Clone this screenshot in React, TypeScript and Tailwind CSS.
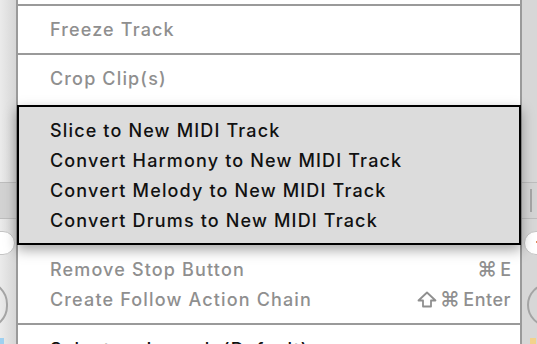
export default function App() {
  const font = { fontFamily: "Inter, 'Noto Sans', sans-serif" }

  return (
    <div
      className="relative flex h-[344px] w-[537px] overflow-hidden bg-[#d9d9d9] text-[18px] font-medium tracking-[1.15px]"
      style={font}
    >
      {/* left side of the app behind the menu */}
      <div className="relative w-[16px] shrink-0 bg-gradient-to-r from-[#ebebeb] to-[#d6d6d6]">
        <div className="absolute left-0 top-[182px] h-[37px] w-full border-y border-[#bdbdbd] bg-[#d2d2d2]" />
        <div className="absolute left-[-20px] top-[231px] h-[24px] w-[35px] rounded-full border border-[#c4c4c4] bg-white" />
        <div className="absolute left-[-38px] top-[281px] h-[48px] w-[46px] rounded-full border-2 border-[#a4a4a4]" />
        <div className="absolute left-0 top-[338px] h-[6px] w-[4px] bg-[#9fd0f0]" />
      </div>

      {/* menu */}
      <div className="relative z-10 w-[506px] shrink-0 border-x-2 border-[#9a9a9a] bg-white">
        <div className="h-[4px]" />
        <div className="h-[2px] bg-[#9a9a9a]" />
        <div className="flex h-[47px] items-center pl-[32px] text-[#8f8f8f]">Freeze Track</div>
        <div className="h-[2px] bg-[#9a9a9a]" />
        <div className="flex h-[50px] items-center pb-[3px] pl-[32px] text-[#8f8f8f]">Crop Clip(s)</div>

        <div className="-mx-[1px] flex h-[140px] flex-col justify-center border-2 border-black bg-[#dcdcdc] pl-[31px] text-[#111] shadow-[0_5px_12px_rgba(0,0,0,0.35)]">
          <div className="flex h-[30px] items-center">Slice to New MIDI Track</div>
          <div className="flex h-[30px] items-center">Convert Harmony to New MIDI Track</div>
          <div className="flex h-[30px] items-center">Convert Melody to New MIDI Track</div>
          <div className="flex h-[30px] items-center">Convert Drums to New MIDI Track</div>
        </div>

        <div className="flex flex-col pt-[9px] pr-[9px] pl-[32px] text-[#8f8f8f]">
          <div className="flex h-[30px] items-center justify-between">
            <span>Remove Stop Button</span>
            <span className="flex items-center gap-[3px] tracking-normal">
              <span className="text-[20px]">⌘</span>E
            </span>
          </div>
          <div className="flex h-[30px] items-center justify-between">
            <span>Create Follow Action Chain</span>
            <span className="flex items-center gap-[3px] tracking-[0.5px]">
              <svg width="20" height="17" viewBox="0 0 20 17" fill="none" stroke="#8f8f8f" strokeWidth="1.8" strokeLinejoin="round">
                <path d="M10 1.5 L18.5 9.5 H14 V15.5 H6 V9.5 H1.5 Z" />
              </svg>
              <span className="text-[20px]">⌘</span>
              <span>Enter</span>
            </span>
          </div>
        </div>
        <div className="mt-[9px] h-[2px] bg-[#9a9a9a]" />
        <div className="flex h-[30px] items-center pt-[18px] pl-[20px] text-[#111]">
          <span className="w-[12px] text-[10px]">•</span>
          <span>Select on Launch (Default)</span>
        </div>
      </div>

      {/* right side of the app behind the menu */}
      <div className="relative flex-1 bg-[#d7d7d7]">
        <div className="absolute left-0 top-[182px] h-[37px] w-full border-y border-[#bdbdbd] bg-[#d4d4d4]" />
        <div className="absolute left-[8px] top-[189px] h-[23px] w-[2px] bg-[#a6a6a6]" />
        <div className="absolute left-[2px] top-[231px] h-[24px] w-[40px] rounded-full border border-[#c4c4c4] bg-white" />
        <div className="absolute left-[14px] top-[241px] h-[2px] w-[2px] bg-[#e08a5a]" />
        <div className="absolute left-[5px] top-[283px] h-[44px] w-[44px] rounded-full border-2 border-[#a4a4a4]" />
        <div className="absolute left-[8px] top-[338px] h-[6px] w-[6px] bg-[#f2d28c]" />
      </div>
    </div>
  )
}
